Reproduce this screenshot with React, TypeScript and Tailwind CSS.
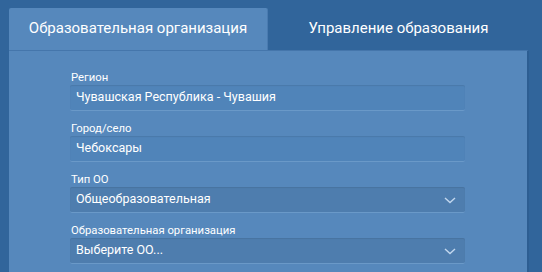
import React from "react";

const Chevron = () => (
  <svg width="12" height="7" viewBox="0 0 12 7" className="absolute right-[9px] top-[10px]">
    <path d="M1 1 L6 5.5 L11 1" fill="none" stroke="#c2d7ee" strokeWidth="1.4" />
  </svg>
);

function Field({ label, value, select }: { label: string; value: string; select?: boolean }) {
  return (
    <div className="flex flex-col">
      <div className="h-[14px] text-[11.3px] leading-[14px] text-white pl-[1px]">{label}</div>
      <div
        className={
          "relative h-[26px] flex items-center pl-[6px] text-[12.5px] text-white rounded-[2px] border-b border-[#6a99c8] shadow-[inset_0_1px_1px_rgba(0,0,0,0.08)] " +
          (select ? "bg-[#4e7dae]" : "bg-[#5084b9]")
        }
      >
        {value}
        {select && <Chevron />}
      </div>
    </div>
  );
}

export default function App() {
  return (
    <div
      className="w-[542px] h-[272px] bg-[#31659b] overflow-hidden pl-[9px] pt-[8px]"
      style={{ fontFamily: 'Roboto, "Open Sans", sans-serif' }}
    >
      <div className="flex h-[42px]">
        <div className="w-[259px] h-[42px] bg-[#5688bc] rounded-t-[2px] border-r border-[#4a7bb0] flex items-center justify-center pb-[1px] text-[15px] text-white">
          Образовательная организация
        </div>
        <div className="w-[261px] h-[42px] flex items-center justify-center pb-[1px] text-[15px] text-white">
          Управление образования
        </div>
      </div>
      <div className="w-[520px] h-[230px] bg-[#5688bc] border-t border-[#4576ab] border-r-2 border-r-[#2d5e92] pl-[61px] pt-[20px]">
        <div className="w-[395px] flex flex-col gap-[11px]">
          <Field label="Регион" value="Чувашская Республика - Чувашия" />
          <Field label="Город/село" value="Чебоксары" />
          <Field label="Тип ОО" value="Общеобразовательная" select />
          <Field label="Образовательная организация" value="Выберите ОО..." select />
        </div>
      </div>
    </div>
  );
}
